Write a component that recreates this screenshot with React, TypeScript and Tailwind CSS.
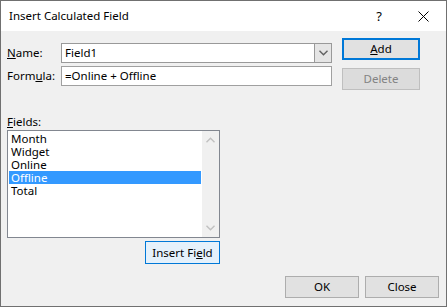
const fields = ["Month", "Widget", "Online", "Offline", "Total"];

const Chevron = ({ up, color }: { up?: boolean; color: string }) => (
  <svg width="9" height="6" viewBox="0 0 9 6" className={up ? "rotate-180" : ""}>
    <path d="M0.5 0.8 L4.5 4.8 L8.5 0.8" fill="none" stroke={color} strokeWidth="1.4" />
  </svg>
);

const App = () => {
  return (
    <div className="flex h-[307px] w-[447px] flex-col border border-[#707070] bg-[#f0f0f0] font-['Noto_Sans',sans-serif] text-[11.5px] leading-[16px] text-black">
      {/* title bar */}
      <div className="flex h-[30px] shrink-0 items-center bg-white pl-[8px]">
        <span>Insert Calculated Field</span>
        <span className="ml-auto text-[13px]">?</span>
        <svg width="11" height="11" viewBox="0 0 11 11" className="ml-[36px] mr-[17px]">
          <path d="M0.5 0.5 L10.5 10.5 M10.5 0.5 L0.5 10.5" stroke="#000" strokeWidth="1" />
        </svg>
      </div>

      <div className="flex flex-1 flex-col pl-[6px]">
        <div className="flex">
          <div className="flex flex-col pt-[12px]">
            <div className="flex items-center">
              <span className="w-[54px]">
                <span className="underline">N</span>ame:
              </span>
              <div className="flex h-[20px] w-[271px] border border-[#999]">
                <div className="flex-1 bg-white pl-[3px] leading-[18px]">Field1</div>
                <div className="flex w-[17px] items-center justify-center border-l border-[#999] bg-[#e5e5e5]">
                  <Chevron color="#606060" />
                </div>
              </div>
            </div>
            <div className="mt-[3px] flex items-center">
              <span className="w-[54px]">
                Form<span className="underline">u</span>la:
              </span>
              <div className="h-[20px] w-[271px] border border-[#a0a0a0] bg-white pl-[3px] leading-[18px]">
                =Online + Offline
              </div>
            </div>
          </div>
          <div className="ml-[10px] flex flex-col pt-[7px]">
            <button className="h-[22px] w-[78px] border-2 border-[#0078d7] bg-[#e1e1e1]">
              <span className="underline">A</span>dd
            </button>
            <button className="mt-[8px] h-[22px] w-[78px] border border-[#bfbfbf] bg-[#dcdcdc] text-[#838383]">
              Delete
            </button>
          </div>
        </div>

        <div className="mt-[24px] flex w-[213px] flex-col">
          <span>
            <span className="underline">F</span>ields:
          </span>
          <div className="flex h-[108px] border border-[#828790] bg-white">
            <div className="flex-1 px-[1px] pt-[1px]">
              {fields.map((f) => (
                <div
                  key={f}
                  className={
                    f === "Offline"
                      ? "h-[13px] bg-[#3399ff] pl-[2px] leading-[13px] text-white"
                      : "h-[13px] pl-[2px] leading-[13px]"
                  }
                >
                  {f}
                </div>
              ))}
            </div>
            <div className="flex w-[17px] flex-col items-center justify-between bg-[#f0f0f0] py-[6px]">
              <Chevron up color="#c0c0c0" />
              <Chevron color="#c0c0c0" />
            </div>
          </div>
          <button className="mt-[3px] h-[23px] w-[75px] self-end border border-[#0078d7] bg-[#e5f1fb]">
            Insert Fi<span className="underline">e</span>ld
          </button>
        </div>

        <div className="mt-auto flex justify-end gap-[6px] pb-[8px] pr-[7px]">
          <button className="h-[22px] w-[74px] border border-[#adadad] bg-[#e1e1e1]">OK</button>
          <button className="h-[22px] w-[74px] border border-[#adadad] bg-[#e1e1e1]">Close</button>
        </div>
      </div>
    </div>
  );
};

export default App;
